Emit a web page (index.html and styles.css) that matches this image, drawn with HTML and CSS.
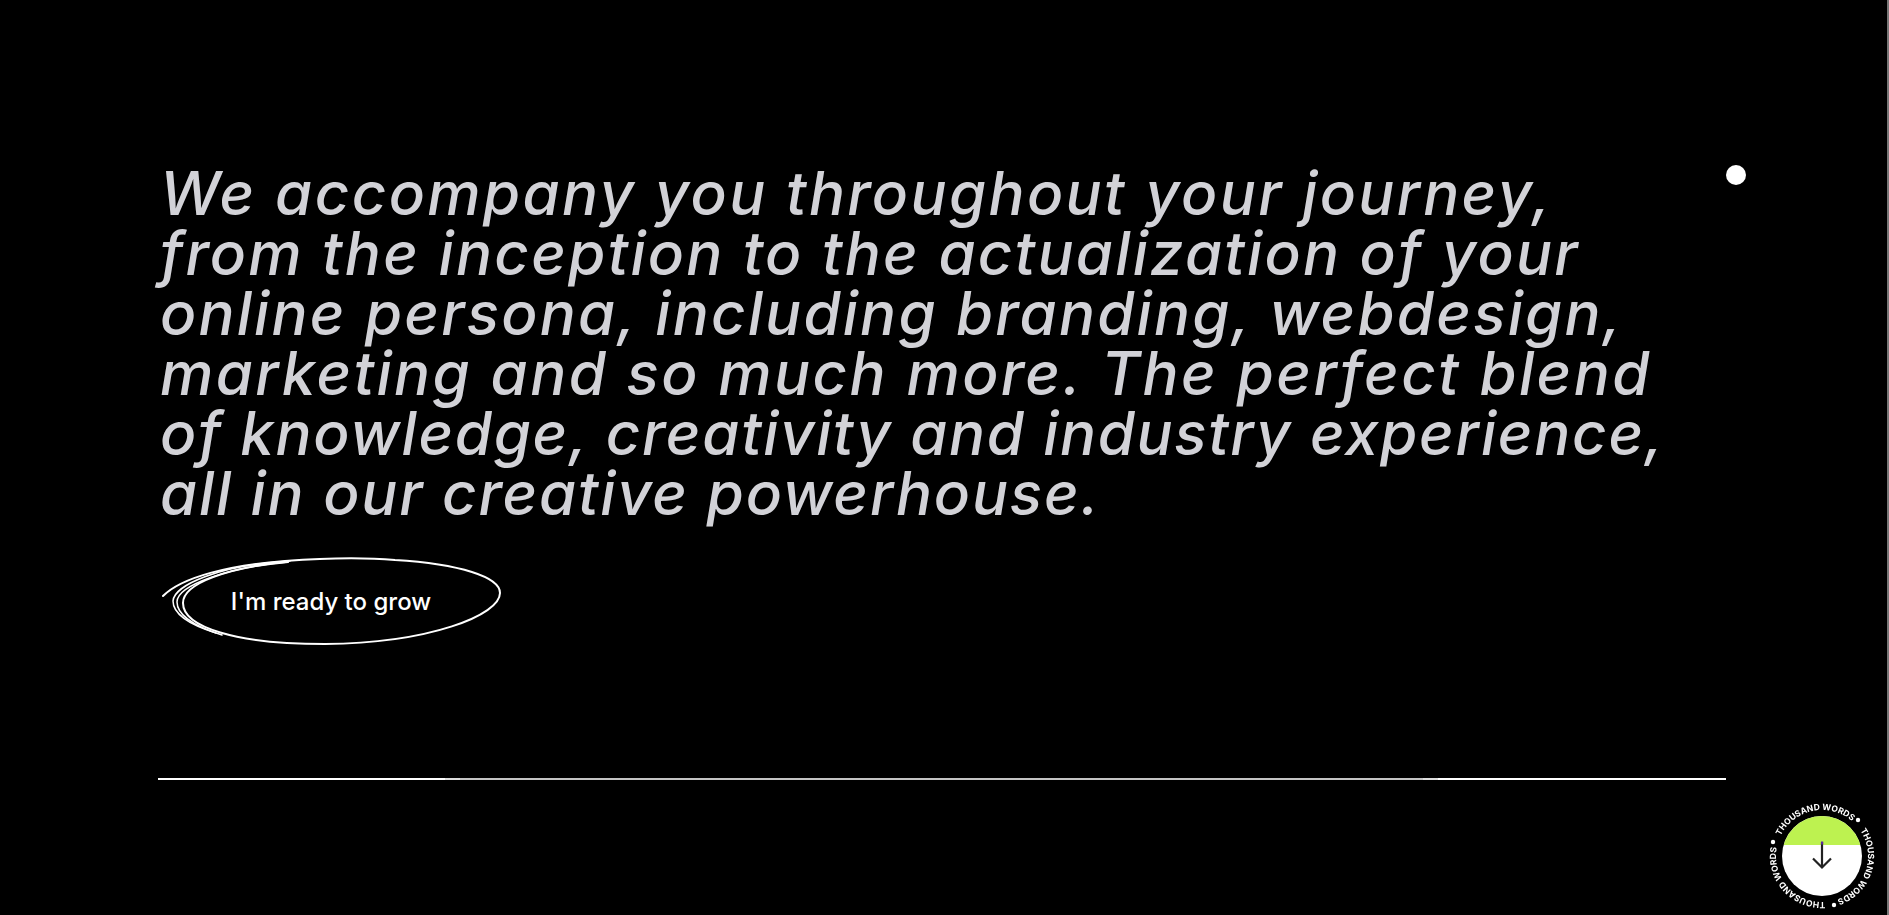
FILE: index.html
```html
<!DOCTYPE html>
<html lang="en">
<head>
<meta charset="UTF-8">
<meta name="viewport" content="width=device-width, initial-scale=1.0">
<title>Thousand Words</title>
<link rel="stylesheet" href="styles.css">
</head>
<body>

<div class="edge"></div>

<main class="intro">
<div class="intro-top">
<h1 class="statement">
<span class="line line-1">We accompany you throughout your journey,</span>
<span class="line line-2">from the inception to the actualization of your</span>
<span class="line line-3">online persona, including branding, webdesign,</span>
<span class="line line-4">marketing and so much more. The perfect blend</span>
<span class="line line-5">of knowledge, creativity and industry experience,</span>
<span class="line line-6">all in our creative powerhouse.</span>
</h1>
<span class="dot"></span>
</div>

<a class="grow-btn" href="#">
<svg class="scribble" viewBox="0 0 342 92" fill="none" stroke="#fff" stroke-linecap="round">
<path stroke-width="2" d="M3 41 C22 22 70 10 125 6 C165 3 200 2 235 5 C300 9 340 22 340 38 C340 60 270 88 165 89 C75 89 23 72 23 48 C23 28 70 12 128 7"/>
<path stroke-width="1.500" d="M62 80 C30 70 17 58 17 47 C17 30 70 12 128 7"/>
<path stroke-width="1.500" d="M56 78 C24 68 13 56 13 46 C14 30 60 10 130 6"/>
</svg>
<span class="grow-label">I'm ready to grow</span>
</a>

<hr class="rule">
</main>

<a class="scroll-badge" href="#">
<svg viewBox="0 0 120 120" width="120" height="120">
<defs>
<path id="ring" d="M60 14 a46 46 0 1 1 -0.010 0"/>
<clipPath id="disc"><circle cx="60" cy="60" r="40"/></clipPath>
</defs>
<g transform="rotate(-64 60 60)"><text class="ring-text"><textPath href="#ring">THOUSAND WORDS</textPath></text></g>
<g transform="rotate(56 60 60)"><text class="ring-text"><textPath href="#ring">THOUSAND WORDS</textPath></text></g>
<g transform="rotate(176 60 60)"><text class="ring-text"><textPath href="#ring">THOUSAND WORDS</textPath></text></g>
<circle cx="96" cy="24" r="2.200" fill="#fff"/>
<circle cx="72" cy="109" r="2.200" fill="#fff"/>
<circle cx="11" cy="46" r="2.200" fill="#fff"/>
<g clip-path="url(#disc)">
<rect x="20" y="20" width="80" height="80" fill="#fff"/>
<rect x="20" y="20" width="80" height="29" fill="#bdf250"/>
</g>
<path d="M60 46 V71 M51 62.500 L60 71.500 L69 62.500" fill="none" stroke="#222" stroke-width="2.200"/>
<rect x="59" y="45.500" width="2.200" height="3" fill="#5a2ca0"/>
</svg>
</a>

</body>
</html>
```

FILE: styles.css
```css
* {
box-sizing: border-box;
}
html, body {
height: 100%;
}
body {
margin: 0;
background-color: #000;
font-family: "Inter", "Noto Sans", sans-serif;
overflow: hidden;
}
.edge {
position: fixed;
top: 0;
right: 0;
bottom: 0;
width: 2px;
background-color: #777;
}
.intro {
padding: 163px 0 0 158px;
width: 1746px;
}
.intro-top {
display: flex;
justify-content: space-between;
align-items: flex-start;
}
.statement {
margin: 0;
padding-left: 2px;
font-size: 60px;
font-weight: 500;
font-style: italic;
line-height: 60px;
color: #d2d2d7;
white-space: nowrap;
}
.line {
display: block;
}
.line-1 { letter-spacing: 2.37px; }
.line-2 { letter-spacing: 2.26px; }
.line-3 { letter-spacing: 2.2px; }
.line-4 { letter-spacing: 2.4px; }
.line-5 { letter-spacing: 1.65px; }
.line-6 { letter-spacing: 1.8px; }
.dot {
width: 20px;
height: 20px;
margin: 2px 0 0 0;
border-radius: 50%;
background-color: #fff;
}
.grow-btn {
position: relative;
display: flex;
align-items: center;
justify-content: center;
width: 342px;
height: 92px;
margin: 32px 0 0 2px;
color: #fff;
text-decoration: none;
}
.scribble {
position: absolute;
top: 0;
left: 0;
width: 342px;
height: 92px;
}
.grow-label {
font-size: 24px;
font-weight: 500;
}
.rule {
margin: 131px 0 0 0;
border: 0;
height: 2px;
width: 1568px;
background: linear-gradient(to right, #fff 287px, #ddd 287px, #ddd 302px, #c4c4c4 302px, #c4c4c4 1265px, #ddd 1265px, #ddd 1280px, #fff 1280px);
}
.scroll-badge {
position: fixed;
right: 7px;
bottom: -1px;
display: block;
width: 120px;
height: 120px;
}
.ring-text {
font-size: 8.500px;
font-weight: 700;
fill: #fff;
}
```
